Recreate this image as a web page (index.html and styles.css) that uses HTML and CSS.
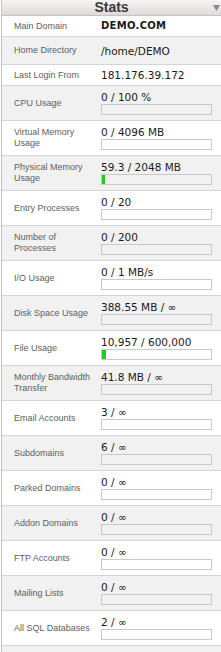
FILE: index.html
```html
<!DOCTYPE html>
<html lang="en">
<head>
  <meta charset="UTF-8">
  <title>Stats</title>
  <link rel="stylesheet" href="styles.css">
</head>
<body>
  <div class="stats">
    <div class="stats-head">
      <span class="title">Stats</span>
      <svg class="toggle" width="7" height="6" viewBox="0 0 7 6"><polygon points="0,0 7,0 3.5,6" fill="#8a8a8a"/></svg>
    </div>

    <div class="row short">
      <div class="label">Main Domain</div>
      <div class="value domain">DEMO.COM</div>
    </div>
    <div class="row home alt">
      <div class="label">Home Directory</div>
      <div class="value">/home/DEMO</div>
    </div>
    <div class="row short">
      <div class="label">Last Login From</div>
      <div class="value">181.176.39.172</div>
    </div>

    <div class="row meter alt">
      <div class="label">CPU Usage</div>
      <div class="value">0 / 100 %<div class="bar"></div></div>
    </div>
    <div class="row meter">
      <div class="label">Virtual Memory Usage</div>
      <div class="value">0 / 4096 MB<div class="bar"></div></div>
    </div>
    <div class="row meter alt">
      <div class="label">Physical Memory Usage</div>
      <div class="value">59.3 / 2048 MB<div class="bar"><div class="fill" style="width: 3px"></div></div></div>
    </div>
    <div class="row meter">
      <div class="label">Entry Processes</div>
      <div class="value">0 / 20<div class="bar"></div></div>
    </div>
    <div class="row meter alt">
      <div class="label">Number of Processes</div>
      <div class="value">0 / 200<div class="bar"></div></div>
    </div>
    <div class="row meter">
      <div class="label">I/O Usage</div>
      <div class="value">0 / 1 MB/s<div class="bar"></div></div>
    </div>
    <div class="row meter alt">
      <div class="label">Disk Space Usage</div>
      <div class="value">388.55 MB / &infin;<div class="bar"></div></div>
    </div>
    <div class="row meter">
      <div class="label">File Usage</div>
      <div class="value">10,957 / 600,000<div class="bar"><div class="fill" style="width: 4px"></div></div></div>
    </div>
    <div class="row meter alt">
      <div class="label">Monthly Bandwidth Transfer</div>
      <div class="value">41.8 MB / &infin;<div class="bar"></div></div>
    </div>
    <div class="row meter">
      <div class="label">Email Accounts</div>
      <div class="value">3 / &infin;<div class="bar"></div></div>
    </div>
    <div class="row meter alt">
      <div class="label">Subdomains</div>
      <div class="value">6 / &infin;<div class="bar"></div></div>
    </div>
    <div class="row meter">
      <div class="label">Parked Domains</div>
      <div class="value">0 / &infin;<div class="bar"></div></div>
    </div>
    <div class="row meter alt">
      <div class="label">Addon Domains</div>
      <div class="value">0 / &infin;<div class="bar"></div></div>
    </div>
    <div class="row meter">
      <div class="label">FTP Accounts</div>
      <div class="value">0 / &infin;<div class="bar"></div></div>
    </div>
    <div class="row meter alt">
      <div class="label">Mailing Lists</div>
      <div class="value">0 / &infin;<div class="bar"></div></div>
    </div>
    <div class="row meter">
      <div class="label">All SQL Databases</div>
      <div class="value">2 / &infin;<div class="bar"></div></div>
    </div>
    <!-- next row is cut off by the window -->
    <div class="row meter alt"></div>
  </div>
</body>
</html>
```

FILE: styles.css
```css
body {
  margin: 0;
  background: #fff;
  font-family: "Liberation Sans", Arial, sans-serif;
}

.stats {
  width: 230px;
  border-left: 1px solid #c4c4c4;
  margin-left: 1px;
}

.stats-head {
  display: flex;
  align-items: center;
  height: 15px;
  padding: 0 6px 0 18px;
  background: linear-gradient(#f6f4f4, #dedada);
  border-bottom: 1px solid #c4c4c4;
}

.title {
  flex: 1;
  text-align: center;
  font-weight: bold;
  font-size: 14px;
  color: #3a3a3a;
  line-height: 15px;
  padding-right: 10px;
}

.toggle {
  margin-right: 6px;
}

.row {
  display: flex;
  align-items: center;
  border-bottom: 1px solid #d4d4d4;
  background: #fff;
}

.row.alt {
  background: #f1f1f1;
}

.row.short {
  height: 20px;
}

.row.home {
  height: 27px;
}

.row.meter {
  height: 34px;
}

.label {
  width: 78px;
  flex: none;
  padding: 0 9px 0 12px;
  font-size: 9px;
  line-height: 11px;
  color: #606060;
}

.value {
  flex: 1;
  font-family: "DejaVu Sans", Verdana, sans-serif;
  font-size: 10.5px;
  line-height: 12px;
  color: #1a1a1a;
}

.value.domain {
  font-weight: bold;
  font-size: 10px;
  letter-spacing: 0.3px;
}

.bar {
  width: 109px;
  height: 9px;
  margin-top: 1px;
  border: 1px solid #c8c8c8;
  display: flex;
}

.fill {
  height: 100%;
  background: #22cc22;
}
```
